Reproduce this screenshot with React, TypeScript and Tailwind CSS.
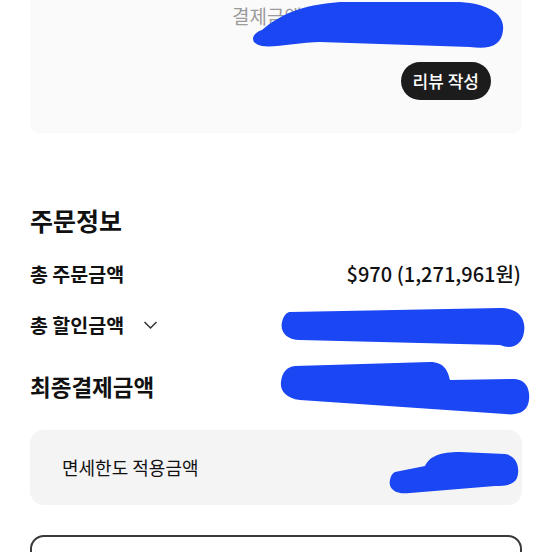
import React from "react";

const BLUE = "#1a46f4";

export default function App() {
  return (
    <div
      className="relative w-[552px] h-[552px] overflow-hidden bg-white text-[#111]"
      style={{ fontFamily: '"Noto Sans CJK KR", "Noto Sans", sans-serif' }}
    >
      <div className="px-[30px]">
        {/* top card */}
        <div className="h-[133px] bg-[#fafafa] rounded-b-[8px] flex flex-col">
          <div className="pl-[202px] pt-[2px] text-[19px] leading-[28px] text-[#9b9b9b]">
            결제금액
          </div>
          <div className="flex justify-end pr-[31px] mt-[32px]">
            <div className="h-[38px] px-[12px] rounded-full bg-[#1c1c1c] text-white text-[17px] font-medium flex items-center">
              리뷰 작성
            </div>
          </div>
        </div>

        {/* order info */}
        <div className="mt-[70px] h-[34px] text-[25px] font-bold leading-[34px]">주문정보</div>

        <div className="mt-[17px] h-[40px] flex items-center justify-between">
          <div className="text-[19.5px] font-semibold">총 주문금액</div>
          <div className="text-[20px] font-medium pr-[1px]">$970 (1,271,961원)</div>
        </div>

        <div className="mt-[11px] h-[40px] flex items-center">
          <div className="text-[19.5px] font-semibold">총 할인금액</div>
          <svg className="ml-[19px]" width="15" height="10" viewBox="0 0 15 10" fill="none">
            <path d="M1.5 2 L7.5 8 L13.5 2" stroke="#333" strokeWidth="1.5" />
          </svg>
        </div>

        <div className="mt-[22px] h-[40px] flex items-center">
          <div className="text-[22.5px] font-bold">최종결제금액</div>
        </div>

        <div className="mt-[23px] h-[75px] rounded-[14px] bg-[#f4f4f5] flex items-center pl-[32px]">
          <div className="text-[18px]">면세한도 적용금액</div>
        </div>

        <div className="mt-[30px] h-[60px] rounded-[14px] border-2 border-[#3a3a3a]" />
      </div>

      {/* redaction scribbles */}
      <svg className="absolute left-0 top-0 pointer-events-none" width="552" height="552" viewBox="0 0 552 552">
        <path
          d="M 262 30 C 280 15, 300 5, 340 2 L 460 2 C 490 4, 505 15, 503 30 C 502 45, 490 50, 470 47 L 320 42 C 300 42, 275 48, 262 46 C 250 44, 250 34, 262 30 Z"
          fill={BLUE}
        />
        <path
          d="M 290 312 L 500 308 C 520 308, 526 320, 524 332 C 522 345, 512 350, 500 345 L 300 340 C 285 340, 280 330, 282 322 C 284 314, 288 312, 290 312 Z"
          fill={BLUE}
        />
        <path
          d="M 295 366 L 430 362 C 445 362, 448 372, 450 380 L 515 379 C 528 380, 530 392, 529 400 C 528 410, 520 416, 505 414 L 300 400 C 285 398, 280 390, 281 382 C 282 372, 287 367, 295 366 Z"
          fill={BLUE}
        />
        <path
          d="M 395 472 L 425 466 C 430 456, 440 452, 460 452 L 505 454 C 518 456, 520 470, 517 478 C 514 485, 505 486, 495 486 L 410 493 C 395 495, 388 488, 390 480 C 391 475, 393 473, 395 472 Z"
          fill={BLUE}
        />
      </svg>
    </div>
  );
}
